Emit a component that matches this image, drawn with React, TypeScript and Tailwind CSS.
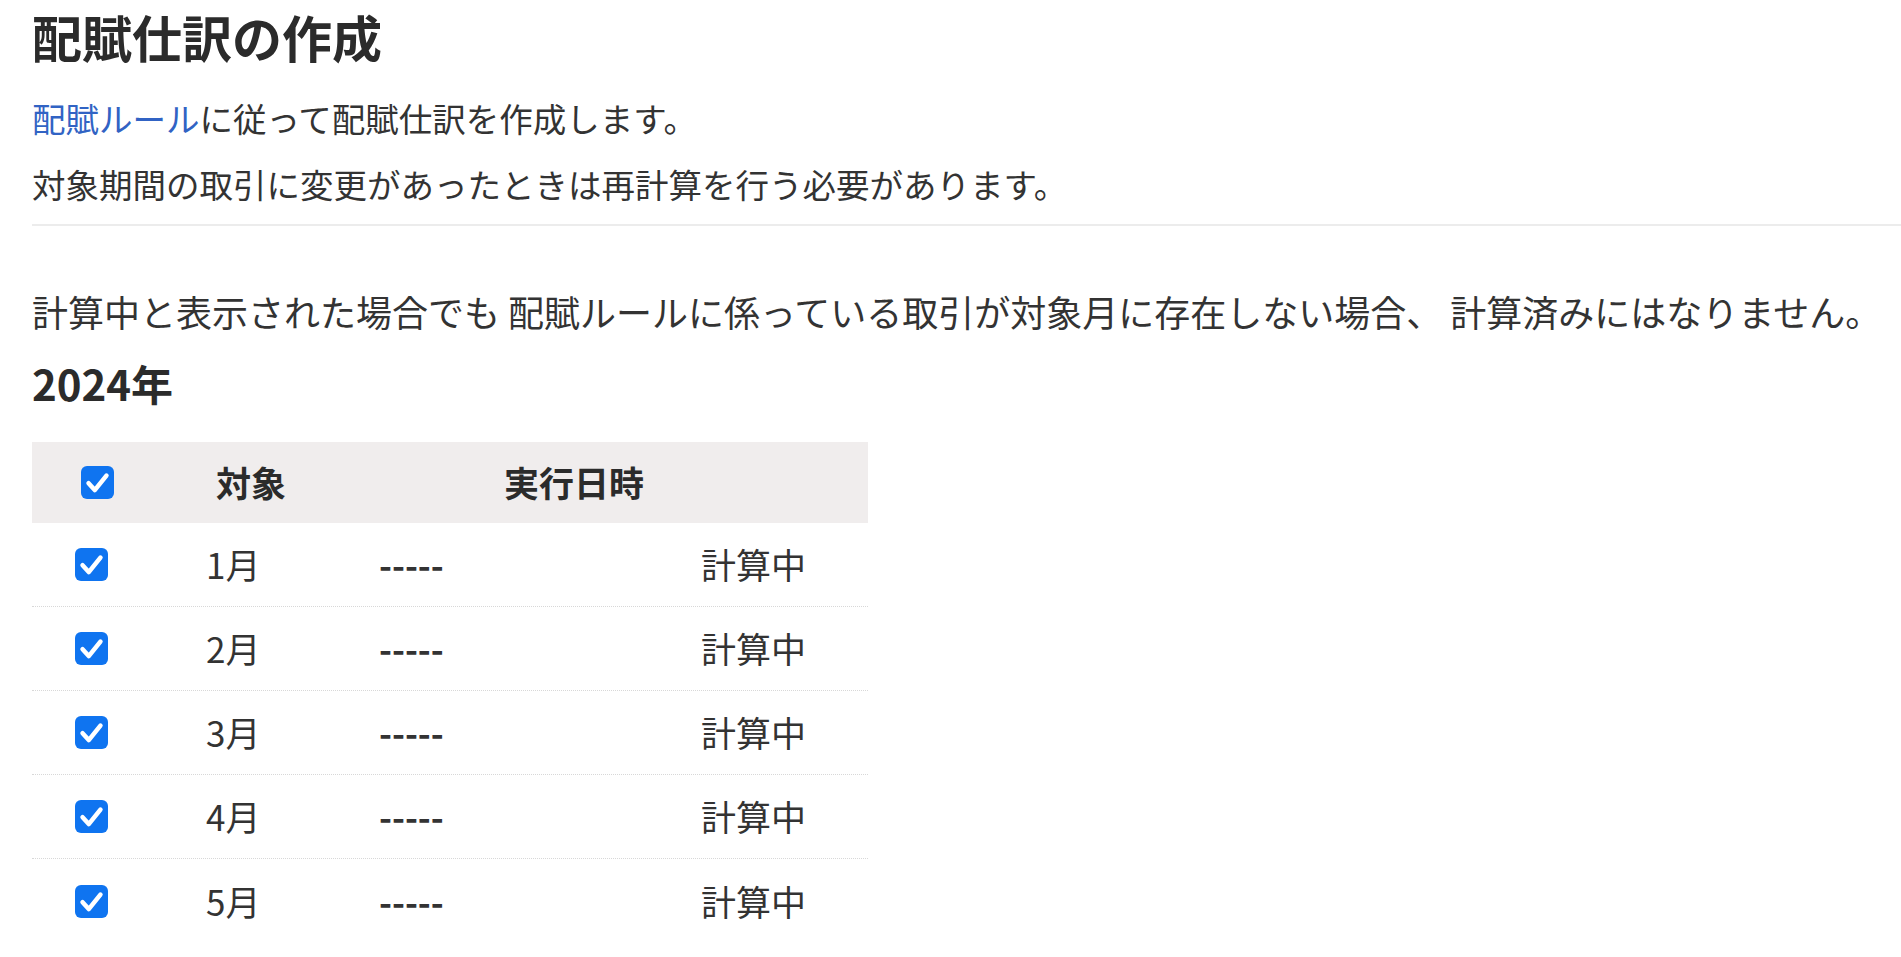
import React from "react";

const font = { fontFamily: '"Noto Sans CJK JP", "Noto Sans", sans-serif' };

function Check() {
  return (
    <span className="inline-flex h-[33px] w-[33px] items-center justify-center rounded-[6px] bg-[#0f74f0]">
      <svg viewBox="0 0 24 24" className="h-[33px] w-[33px]" fill="none">
        <path d="M5.5 12.5l4.5 5 8.5-10.5" stroke="#fff" strokeWidth="3.3" strokeLinecap="round" strokeLinejoin="round" />
      </svg>
    </span>
  );
}

const months = ["1月", "2月", "3月", "4月", "5月"];

export default function App() {
  return (
    <div className="min-h-screen overflow-hidden bg-white px-[32px] text-[#333]" style={font}>
      <h1 className="text-[50px] font-bold leading-[72px] text-[#2b2b2b]">配賦仕訳の作成</h1>

      <div className="mt-[13px] text-[33.5px] leading-[66px]">
        <p>
          <a className="text-[#3163c4]">配賦ルール</a>に従って配賦仕訳を作成します。
        </p>
        <p>対象期間の取引に変更があったときは再計算を行う必要があります。</p>
      </div>
      <div className="-mr-[32px] mt-[7px] border-t-2 border-[#ececec]" />

      <p className="mt-[58px] whitespace-nowrap text-[36px] leading-[54px]">
        計算中と表示された場合でも 配賦ルールに係っている取引が対象月に存在しない場合、 計算済みにはなりません。
      </p>

      <h2 className="mt-[18px] text-[42px] font-bold leading-[54px] text-[#2b2b2b]">2024年</h2>

      <div className="mt-[32px] w-[836px]">
        <div className="flex h-[81px] items-center bg-[#f0eded] text-[35px] font-bold text-[#2b2b2b]">
          <div className="flex w-[184px] pl-[49px]">
            <Check />
          </div>
          <div className="w-[288px]">対象</div>
          <div>実行日時</div>
        </div>
        {months.map((m, i) => (
          <div
            key={m}
            className={
              "flex h-[84px] items-center text-[35px] " +
              (i < months.length - 1 ? "border-b border-dotted border-[#d8d8d8]" : "")
            }
          >
            <div className="flex w-[174px] pl-[43px]">
              <Check />
            </div>
            <div className="w-[173px]">{m}</div>
            <div className="w-[322px] font-bold text-[#333]">-----</div>
            <div>計算中</div>
          </div>
        ))}
      </div>
    </div>
  );
}
